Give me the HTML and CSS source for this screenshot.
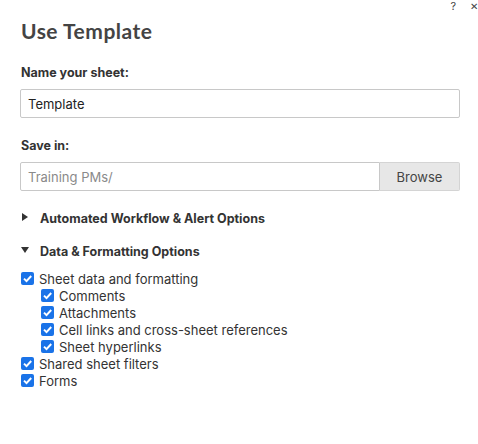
FILE: index.html
```html
<!DOCTYPE html>
<html lang="en">
<head>
    <meta charset="UTF-8">
    <title>Use Template</title>
    <link rel="stylesheet" href="styles.css">
</head>
<body>
    <div class="dialog">
        <div class="top-icons">
            <span class="help">?</span>
            <span class="close">&#x2715;</span>
        </div>
        <h2>Use Template</h2>

        <label class="field-label">Name your sheet:</label>
        <input type="text" class="text-input" value="Template">

        <label class="field-label">Save in:</label>
        <div class="browse-row">
            <input type="text" class="text-input location" value="Training PMs/" readonly>
            <button type="button" class="browse-btn">Browse</button>
        </div>

        <div class="section">
            <span class="caret caret-right"></span>
            <span>Automated Workflow &amp; Alert Options</span>
        </div>
        <div class="section">
            <span class="caret caret-down"></span>
            <span>Data &amp; Formatting Options</span>
        </div>

        <ul class="options">
            <li><span class="box"></span>Sheet data and formatting</li>
            <li class="nested"><span class="box"></span>Comments</li>
            <li class="nested"><span class="box"></span>Attachments</li>
            <li class="nested"><span class="box"></span>Cell links and cross-sheet references</li>
            <li class="nested"><span class="box"></span>Sheet hyperlinks</li>
            <li><span class="box"></span>Shared sheet filters</li>
            <li><span class="box"></span>Forms</li>
        </ul>
    </div>
</body>
</html>
```

FILE: styles.css
```css
* {
    box-sizing: border-box;
    margin: 0;
    padding: 0;
}

body {
    font-family: Inter, "Liberation Sans", sans-serif;
    background-color: #fff;
    color: #333;
}

.dialog {
    width: 478px;
    height: 444px;
    padding: 0 18px 0 20px;
    display: flex;
    flex-direction: column;
}

.top-icons {
    display: flex;
    justify-content: flex-end;
    gap: 14px;
    height: 14px;
    margin-right: -18px;
    font-size: 11px;
    line-height: 12px;
    color: #444;
}

.close {
    font-size: 10px;
}

h2 {
    font-family: Lato, "Liberation Sans", sans-serif;
    font-size: 21px;
    font-weight: 700;
    letter-spacing: 0.5px;
    color: #444;
    margin: 3px 0 0 1px;
    line-height: 28px;
}

.field-label {
    display: block;
    font-size: 12.5px;
    font-weight: 700;
    color: #333;
    margin: 20px 0 0 1px;
    line-height: 16px;
}

.text-input {
    width: 440px;
    height: 29px;
    margin-top: 8px;
    padding: 0 7px;
    border: 1px solid #c8c8c8;
    border-radius: 2px;
    font-family: Inter, "Liberation Sans", sans-serif;
    font-size: 13px;
    color: #222;
    background-color: #fff;
}

.text-input + .field-label {
    margin-top: 20px;
}

.browse-row {
    display: flex;
    width: 440px;
    margin-top: 8px;
}

.browse-row .location {
    width: 360px;
    margin-top: 0;
    border-radius: 2px 0 0 2px;
    color: #8a8a8a;
}

.browse-btn {
    width: 80px;
    height: 29px;
    border: 1px solid #d4d4d4;
    border-left: none;
    border-radius: 0 2px 2px 0;
    background-color: #e7e7e7;
    font-family: Inter, "Liberation Sans", sans-serif;
    font-size: 13px;
    color: #444;
}

.section {
    display: flex;
    align-items: center;
    margin-top: 18px;
    height: 18px;
    font-size: 12.5px;
    font-weight: 700;
    color: #333;
}

.section + .section {
    margin-top: 15px;
}

.caret {
    width: 20px;
    height: 18px;
    position: relative;
}

.caret-right::before {
    content: "";
    position: absolute;
    left: 2px;
    top: 4px;
    border-top: 4px solid transparent;
    border-bottom: 4px solid transparent;
    border-left: 6px solid #333;
}

.caret-down::before {
    content: "";
    position: absolute;
    left: 1px;
    top: 5px;
    border-left: 4px solid transparent;
    border-right: 4px solid transparent;
    border-top: 6px solid #333;
}

.options {
    list-style: none;
    margin-top: 10px;
    margin-left: 1px;
}

.options li {
    display: flex;
    align-items: center;
    height: 17px;
    font-size: 13px;
    color: #333;
}

.options li.nested {
    padding-left: 20px;
}

.box {
    width: 13px;
    height: 13px;
    margin-right: 5px;
    border-radius: 2px;
    background-color: #1a73e8;
    background-image: url("data:image/svg+xml,%3Csvg xmlns='http://www.w3.org/2000/svg' viewBox='0 0 13 13'%3E%3Cpath d='M3 6.6l2.5 2.5L10.2 4' fill='none' stroke='%23fff' stroke-width='2'/%3E%3C/svg%3E");
}
```
